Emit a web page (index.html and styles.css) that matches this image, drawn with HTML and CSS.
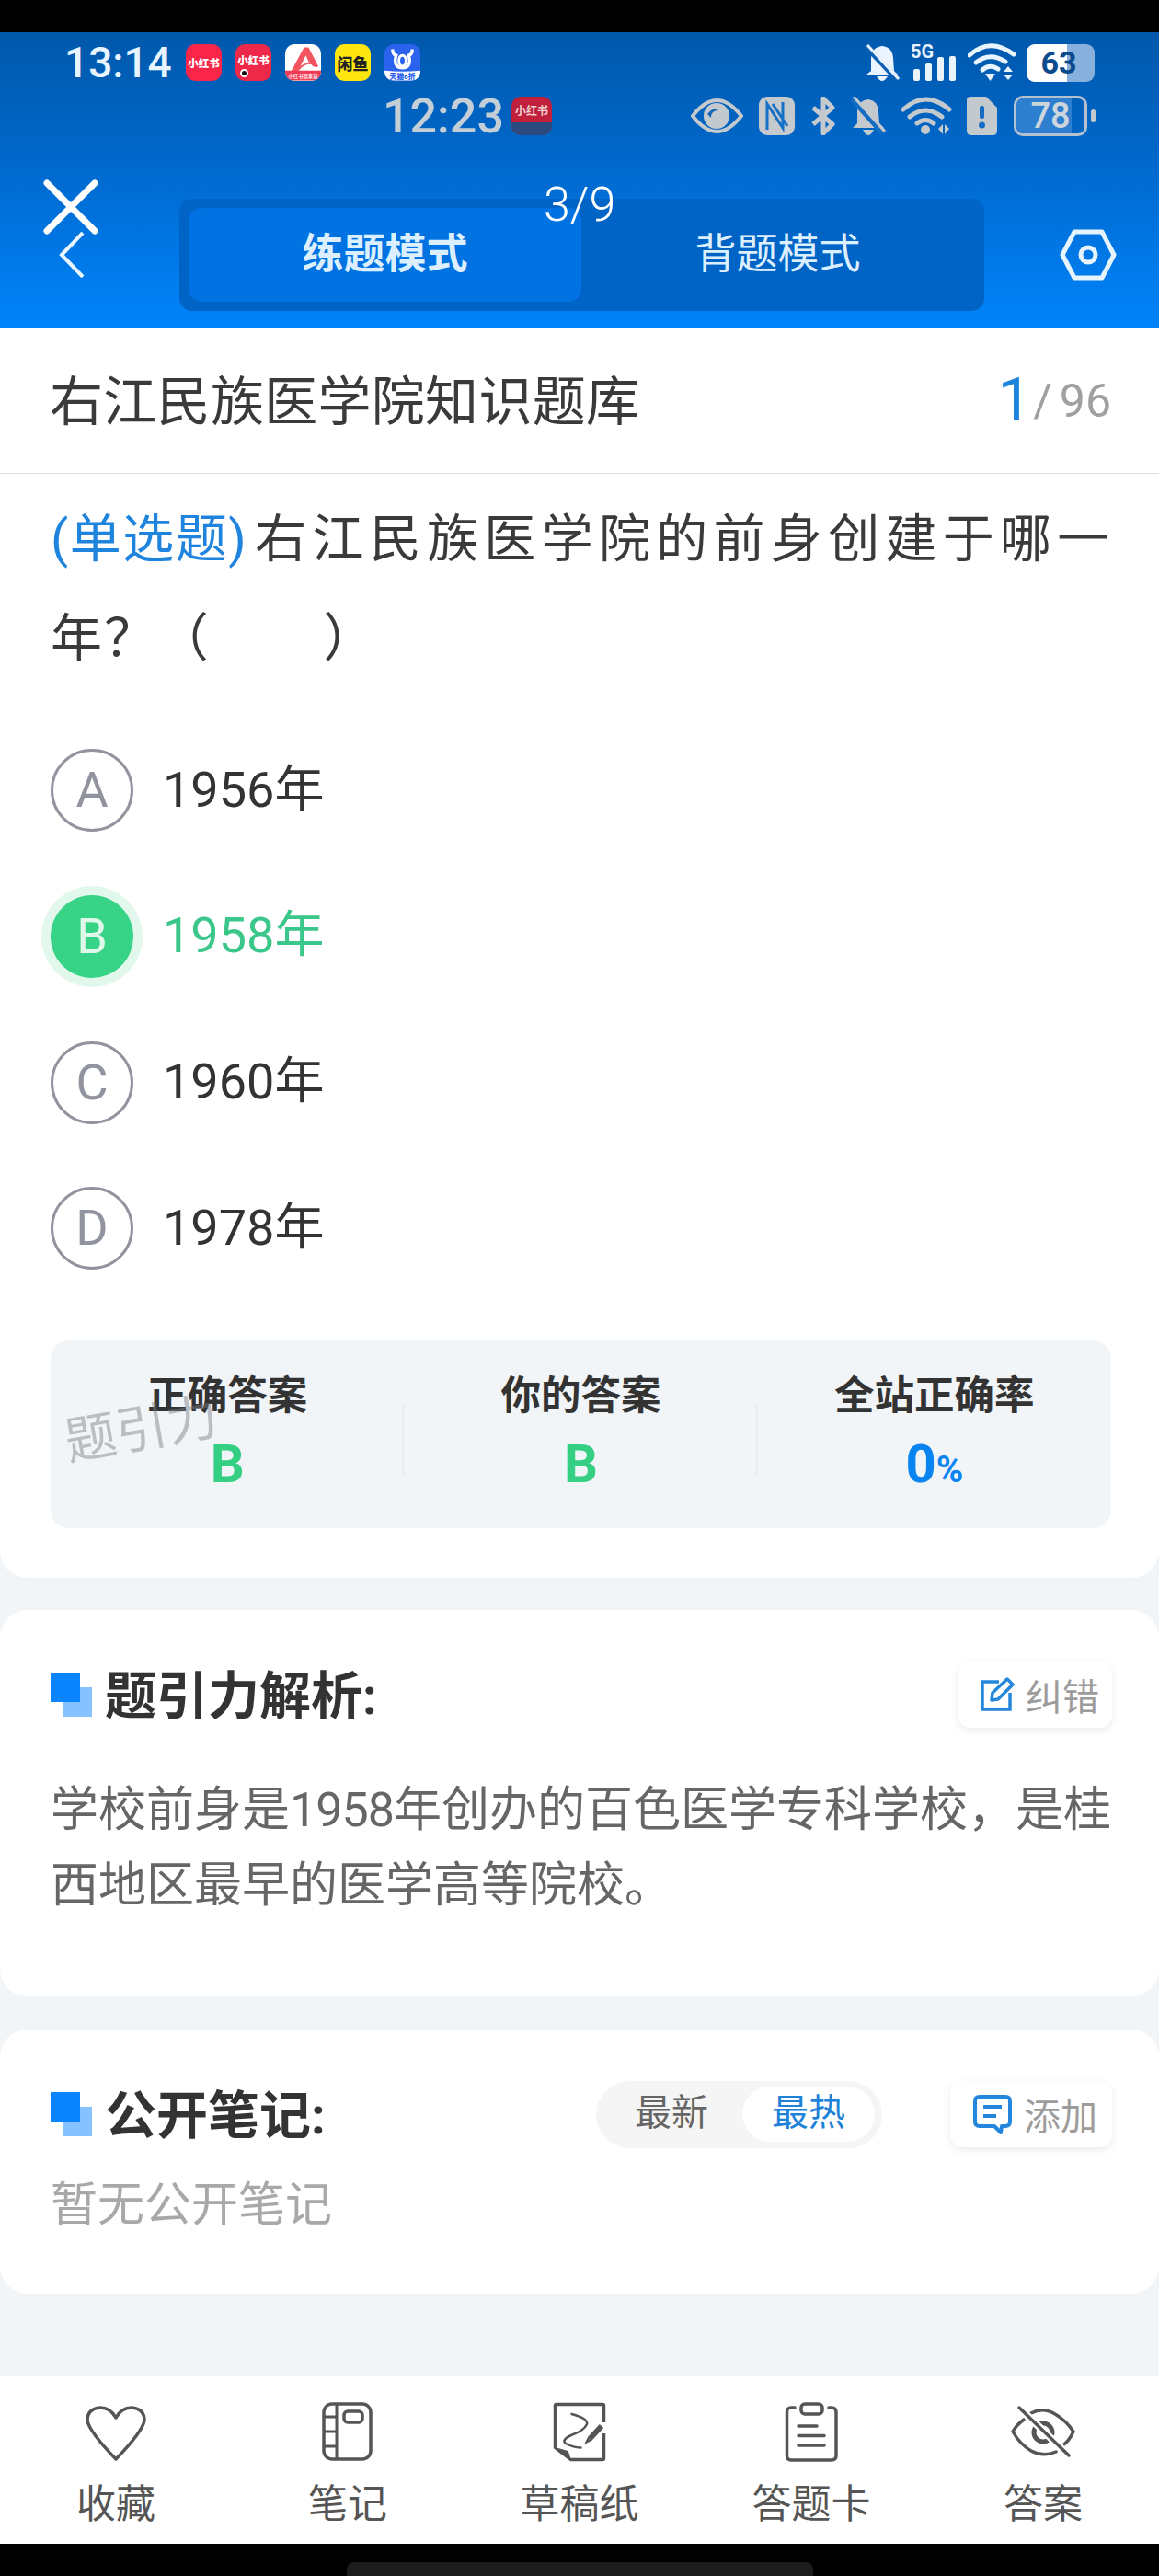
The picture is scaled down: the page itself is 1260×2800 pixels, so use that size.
FILE: index.html
```html
<!DOCTYPE html>
<html lang="zh">
<head>
    <meta charset="utf-8">
    <title>右江民族医学院知识题库</title>
    <link rel="stylesheet" href="styles.css">
</head>
<body>
<div class="phone">
    <div class="top-black"></div>

    <header class="header">
        <!-- system status bar -->
        <div class="status status-a">
            <span class="time-a">13:14</span>
            <div class="apps">
                <span class="app app-red">小红书</span>
                <span class="app app-red2">小红书<i class="app-dot"></i></span>
                <span class="app app-white">
                    <svg viewBox="0 0 40 40" class="app-svg"><path d="M21 3 H26 L37 24 Q33 27 29 22 Q24 21 18 26 L11 33 L6 31 Z M23 12 L17 24 Q22 20 27 21 Z" fill="#f2555f" fill-rule="evenodd"/><path d="M0 29 H40 V34 Q40 40 34 40 H6 Q0 40 0 34 Z" fill="#ee3a52"/><text x="20" y="37" class="band-text band-light">小红书赛家版</text></svg>
                </span>
                <span class="app app-yellow">闲鱼</span>
                <span class="app app-blue">
                    <svg viewBox="0 0 40 40" class="app-svg"><path d="M9 5 Q9 11 13 12 Q12 15 12 18 Q12 26 20 26 Q28 26 28 18 Q28 15 27 12 Q31 11 31 5" fill="none" stroke="#fff" stroke-width="3.500"/><ellipse cx="20" cy="18" rx="4" ry="6" fill="none" stroke="#fff" stroke-width="3"/><path d="M0 29 Q20 31 40 29 V34 Q40 40 34 40 H6 Q0 40 0 34 Z" fill="#fff"/><text x="20" y="38" class="band-text band-blue">天猫6折</text></svg>
                </span>
            </div>
            <div class="status-icons">
                <svg class="ic-bell" viewBox="0 0 38 40"><path d="M19 2 Q30 3 31 15 L32 29 L36 33 H2 L7 29 L7 15 Q8 3 19 2 Z M13 35 H25 Q22 40 19 40 Q16 40 13 35 Z" fill="#eaf4ff"/><path d="M2 3 L35 38" stroke="#0a5fb4" stroke-width="6"/><path d="M3 1 L37 38" stroke="#eaf4ff" stroke-width="3"/></svg>
                <svg class="ic-signal" viewBox="0 0 49 40"><text x="0" y="15" class="sig-text">5G</text><rect x="3" y="27" width="7" height="13" rx="2" fill="#eaf4ff"/><rect x="16" y="21" width="7" height="19" rx="2" fill="#eaf4ff"/><rect x="29" y="14" width="7" height="26" rx="2" fill="#eaf4ff"/><rect x="42" y="13" width="7" height="27" rx="2" fill="#eaf4ff"/></svg>
                <svg class="ic-wifi" viewBox="0 0 52 42"><g fill="none" stroke="#eaf4ff" stroke-width="5" stroke-linecap="round"><path d="M2 13 Q24 -7 50 12"/><path d="M9 21 Q24 9 41 20"/><path d="M16 29 Q24 22 33 28"/></g><path d="M19 33 H30 L24.500 41 Z" fill="#eaf4ff"/><path d="M44 25 L49 31 H39 Z M39 34 H49 L44 40 Z" fill="#eaf4ff"/></svg>
                <div class="bat-a"><span class="bat-a-fill"></span><span class="bat-a-num">63</span></div>
            </div>
        </div>

        <!-- second status bar, from the page capture -->
        <div class="status status-b">
            <span class="time-b">12:23</span>
            <span class="app-b">小红书<i class="app-b-band"></i></span>
            <div class="status-icons-b">
                <svg class="ic-eye" viewBox="0 0 57 40"><path d="M2 20 Q28 -14 55 20 Q28 54 2 20 Z" fill="none" stroke="#c4c9ce" stroke-width="4"/><circle cx="28" cy="20" r="14" fill="#c4c9ce"/><path d="M18 18 Q24 10 30 14 Q22 14 22 22 Z" fill="#1566b8"/></svg>
                <svg class="ic-nfc" viewBox="0 0 39 42"><rect width="39" height="42" rx="9" fill="#c4c9ce"/><path d="M9 36 V8 L26 34 V6 M15 8 L31 32" fill="none" stroke="#1670c6" stroke-width="3"/></svg>
                <svg class="ic-bt" viewBox="0 0 28 42"><path d="M3 12 L24 30 L14 40 V2 L24 12 L3 30" fill="none" stroke="#c4c9ce" stroke-width="5" stroke-linejoin="round"/></svg>
                <svg class="ic-bell-b" viewBox="0 0 38 42"><path d="M19 3 Q29 4 30 16 L31 29 L36 34 H2 L7 29 L7 16 Q8 4 19 3 Z M13 36 H25 Q22 42 19 42 Q16 42 13 36 Z" fill="#c4c9ce"/><path d="M1 2 L35 40" stroke="#136cc2" stroke-width="6"/><path d="M3 0 L37 38" stroke="#c4c9ce" stroke-width="3"/></svg>
                <svg class="ic-wifi-b" viewBox="0 0 55 42"><g fill="none" stroke="#c4c9ce" stroke-width="5" stroke-linecap="round"><path d="M2 14 Q26 -8 52 14"/><path d="M9 22 Q26 8 44 22"/><path d="M17 29 Q26 22 35 29"/></g><circle cx="26" cy="36" r="5" fill="#c4c9ce"/><path d="M40 35 L45 30 V41 Z M47 30 L52 35 L47 41 Z" fill="#c4c9ce"/></svg>
                <svg class="ic-sim" viewBox="0 0 33 42"><path d="M4 0 H21 L33 12 V37 Q33 42 28 42 H5 Q0 42 0 37 V4 Q0 0 4 0 Z" fill="#c4c9ce"/><rect x="14" y="10" width="5" height="14" rx="2" fill="#136cc2"/><circle cx="16.500" cy="31" r="3.500" fill="#136cc2"/></svg>
                <div class="bat-b"><span class="bat-b-fill"></span><span class="bat-b-num">78</span></div>
                <span class="bat-b-nub"></span>
            </div>
        </div>

        <div class="tab-row">
            <svg class="ic-back" viewBox="0 0 28 50"><path d="M26 1 L3 25 L26 49" fill="none" stroke="#eaf6ff" stroke-width="4"/></svg>
            <div class="tabs">
                <div class="tab tab-on">练题模式</div>
                <div class="tab">背题模式</div>
            </div>
            <svg class="ic-hex" viewBox="0 0 62 56"><path d="M16 3 H46 L59 28 L46 53 H16 L3 28 Z" fill="none" stroke="#e6f4ff" stroke-width="5" stroke-linejoin="round"/><circle cx="31" cy="28" r="8" fill="none" stroke="#e6f4ff" stroke-width="5"/></svg>
        </div>

        <svg class="ic-close" viewBox="0 0 60 60"><path d="M4 4 L56 56 M56 4 L4 56" stroke="#fff" stroke-width="7" stroke-linecap="round"/></svg>
        <div class="counter">3/9</div>
    </header>

    <main class="main">
        <section class="card card-q">
            <div class="title-row">
                <span class="title">右江民族医学院知识题库</span>
                <span class="progress"><b>1</b><i>/</i>96</span>
            </div>
            <div class="question"><span class="q-type">(单选题)</span>右江民族医学院的前身创建于哪一<br>年<span class="q-tail">？（&nbsp;&nbsp;&nbsp;&nbsp;&nbsp;&nbsp;&nbsp;&nbsp;）</span></div>

            <div class="options">
                <div class="option"><span class="letter">A</span><span class="opt-text">1956年</span></div>
                <div class="option option-ok"><span class="letter">B</span><span class="opt-text">1958年</span></div>
                <div class="option"><span class="letter">C</span><span class="opt-text">1960年</span></div>
                <div class="option"><span class="letter">D</span><span class="opt-text">1978年</span></div>
            </div>

            <div class="stats">
                <div class="stat">
                    <div class="stat-label">正确答案</div>
                    <div class="stat-val green">B</div>
                </div>
                <div class="stat">
                    <div class="stat-label">你的答案</div>
                    <div class="stat-val green">B</div>
                </div>
                <div class="stat">
                    <div class="stat-label">全站正确率</div>
                    <div class="stat-val blue">0<small>%</small></div>
                </div>
                <div class="watermark">题引力</div>
            </div>
        </section>

        <section class="card card-analysis">
            <div class="sec-head">
                <span class="sec-mark"></span>
                <h2 class="sec-title">题引力解析:</h2>
                <div class="mini-btn">
                    <svg class="ic-edit" viewBox="0 0 38 38"><path d="M21 5 H3 V35 H33 V17" fill="none" stroke="#2487dc" stroke-width="3.500"/><path d="M13 25 L14 17 L30 2 L36 8 L20 24 Z" fill="none" stroke="#2487dc" stroke-width="3.500" stroke-linejoin="round"/></svg>
                    纠错
                </div>
            </div>
            <p class="analysis">学校前身是<span class="tight">1958</span>年创办的百色医学专科学校，是桂<br>西地区最早的医学高等院校。</p>
        </section>

        <section class="card card-notes">
            <div class="sec-head">
                <span class="sec-mark"></span>
                <h2 class="sec-title">公开笔记:</h2>
                <div class="sort">
                    <span class="sort-item">最新</span>
                    <span class="sort-item sort-on">最热</span>
                </div>
                <div class="mini-btn mini-btn-add">
                    <svg class="ic-note" viewBox="0 0 44 44"><path d="M8 3 H36 Q41 3 41 8 V30 Q41 35 36 35 H32 L31 42 L24 35 H8 Q3 35 3 30 V8 Q3 3 8 3 Z" fill="none" stroke="#2487dc" stroke-width="4" stroke-linejoin="round"/><path d="M12 14 H32 M12 24 H26" stroke="#2487dc" stroke-width="4"/></svg>
                    添加
                </div>
            </div>
            <p class="empty">暂无公开笔记</p>
        </section>
    </main>

    <nav class="bottom">
        <div class="nav-item">
            <svg class="nav-ic" viewBox="0 0 70 66"><path d="M35 63 Q6 33 4 21 Q4 8 18 7 Q29 7 35 18 Q41 7 52 7 Q66 8 66 21 Q64 33 35 63 Z" fill="none" stroke="#555" stroke-width="3.500" stroke-linejoin="round"/></svg>
            <span>收藏</span>
        </div>
        <div class="nav-item">
            <svg class="nav-ic" viewBox="0 0 70 66"><rect x="9" y="3" width="51" height="60" rx="9" fill="none" stroke="#555" stroke-width="3.500"/><path d="M23 3 V63 M9 17 H23 M9 33 H23 M9 49 H23" stroke="#555" stroke-width="3"/><rect x="31" y="11" width="20" height="12" rx="4" fill="none" stroke="#555" stroke-width="3.500"/></svg>
            <span>笔记</span>
        </div>
        <div class="nav-item">
            <svg class="nav-ic" viewBox="0 0 70 66"><path d="M8.500 51 V5 Q8.500 3.500 10 3.500 H60 Q61.500 3.500 61.500 5 V23 M61.500 35 V62 Q61.500 63.500 60 63.500 H25" fill="none" stroke="#555" stroke-width="3.500"/><path d="M8 51 L25 64 L22 55 Z" fill="#555" stroke="#555" stroke-width="2" stroke-linejoin="round"/><path d="M26.500 14 Q45 19 43 25 Q40 32 26 37 Q15 42 20 46 Q27 50 36.500 50.500" fill="none" stroke="#555" stroke-width="2.500" stroke-linecap="round"/><path d="M59 27 L46 41" stroke="#555" stroke-width="6"/><path d="M44 39 L48 43 L40 47 Z" fill="#555"/></svg>
            <span>草稿纸</span>
        </div>
        <div class="nav-item">
            <svg class="nav-ic" viewBox="0 0 70 66"><path d="M17 7 H13 Q8.500 7 8.500 12 V59 Q8.500 64 13 64 H57 Q62 64 62 59 V12 Q62 7 57 7 H54" fill="none" stroke="#555" stroke-width="3.500" stroke-linecap="round"/><rect x="24" y="3" width="23" height="11" rx="4" fill="none" stroke="#555" stroke-width="3.500"/><path d="M21 27 H41 M21 37.500 H49 M21 48 H49" stroke="#555" stroke-width="3.500" stroke-linecap="round"/></svg>
            <span>答题卡</span>
        </div>
        <div class="nav-item">
            <svg class="nav-ic" viewBox="0 0 70 66"><path d="M22 13 Q35 6 48 14 Q60 21 68 33 Q63 44 55 49 M49 55 Q35 61 22 54 Q10 47 2 33 Q6 26 14 20" fill="none" stroke="#555" stroke-width="3.500" stroke-linecap="round" stroke-linejoin="round"/><circle cx="35" cy="34" r="10" fill="none" stroke="#555" stroke-width="5"/><path d="M9 7 L63 59" stroke="#fff" stroke-width="8"/><path d="M9 7 L63 59" stroke="#555" stroke-width="3.500" stroke-linecap="round"/></svg>
            <span>答案</span>
        </div>
    </nav>

    <div class="bottom-black"><div class="home-bar"></div></div>
</div>
</body>
</html>
```

FILE: styles.css
```css
* {
    box-sizing: border-box;
}
body {
    margin: 0;
    background: #000;
    font-family: Roboto, "Noto Sans CJK SC", sans-serif;
    color: #333;
}
.phone {
    width: 1260px;
    height: 2800px;
    display: flex;
    flex-direction: column;
    overflow: hidden;
}
.top-black {
    height: 35px;
    background: #000;
}

/* header */
.header {
    position: relative;
    height: 322px;
    padding-top: 13px;
    background: linear-gradient(180deg, #0058ab 0%, #0069cd 45%, #0084fb 100%);
}
.status {
    display: flex;
    align-items: center;
}
.status-a {
    height: 40px;
    padding: 0 70px;
}
.time-a {
    width: 132px;
    font-size: 46px;
    font-weight: 500;
    color: #e8f4fe;
}
.apps {
    display: flex;
    gap: 15px;
}
.app {
    position: relative;
    width: 39px;
    height: 40px;
    border-radius: 10px;
    overflow: hidden;
    display: flex;
    align-items: center;
    justify-content: center;
    font-size: 11.500px;
    font-weight: 900;
    color: #fff;
    white-space: nowrap;
}
.app-red {
    background: #f9264a;
}
.app-red2 {
    background: #ee2848;
    padding-bottom: 6px;
}
.app-dot {
    position: absolute;
    left: 5px;
    bottom: 4px;
    width: 9px;
    height: 9px;
    border-radius: 50%;
    background: #111;
    border: 2px solid #fff;
}
.app-white {
    background: #fff;
}
.app-yellow {
    background: #ffe60f;
    color: #222;
    font-size: 17px;
}
.app-blue {
    background: #2b62ee;
}
.app-svg {
    width: 39px;
    height: 40px;
    display: block;
}
.band-text {
    font-size: 5.500px;
    text-anchor: middle;
}
.band-light {
    fill: #ffd5da;
}
.band-blue {
    fill: #2b62ee;
    font-size: 8px;
}
.status-icons {
    margin-left: auto;
    display: flex;
    align-items: center;
}
.ic-bell {
    width: 38px;
    height: 40px;
}
.ic-signal {
    width: 49px;
    height: 40px;
    margin-left: 12px;
    overflow: visible;
}
.sig-text {
    font-size: 20px;
    font-weight: 700;
    fill: #eaf4ff;
}
.ic-wifi {
    width: 52px;
    height: 42px;
    margin-left: 13px;
}
.bat-a {
    position: relative;
    width: 74px;
    height: 41px;
    margin-left: 12px;
    border-radius: 9px;
    overflow: hidden;
    background: #88b0dc;
    text-align: center;
}
.bat-a-fill {
    position: absolute;
    left: 0;
    top: 0;
    width: 44px;
    height: 41px;
    background: #fff;
}
.bat-a-num {
    position: relative;
    left: -2px;
    font-size: 34px;
    line-height: 41px;
    font-weight: 700;
    color: #0b4a8c;
}
.status-b {
    height: 42px;
    margin-top: 17px;
    padding: 0 69px 0 416px;
}
.time-b {
    width: 140px;
    font-size: 52px;
    font-weight: 500;
    color: #c3ced7;
}
.app-b {
    position: relative;
    width: 44px;
    height: 42px;
    padding-top: 6px;
    border-radius: 10px;
    overflow: hidden;
    background: #c0203c;
    color: #f0d0d0;
    font-size: 12px;
    font-weight: 700;
    text-align: center;
    white-space: nowrap;
}
.app-b-band {
    position: absolute;
    left: 0;
    bottom: 0;
    width: 44px;
    height: 14px;
    background: #2a4a80;
}
.status-icons-b {
    margin-left: auto;
    display: flex;
    align-items: center;
}
.ic-eye {
    width: 57px;
    height: 40px;
}
.ic-nfc {
    width: 39px;
    height: 42px;
    margin-left: 17px;
}
.ic-bt {
    width: 28px;
    height: 42px;
    margin-left: 17px;
}
.ic-bell-b {
    width: 38px;
    height: 42px;
    margin-left: 16px;
}
.ic-wifi-b {
    width: 55px;
    height: 42px;
    margin-left: 17px;
}
.ic-sim {
    width: 33px;
    height: 42px;
    margin-left: 16px;
}
.bat-b {
    position: relative;
    width: 80px;
    height: 44px;
    margin-left: 18px;
    border: 3px solid #b4c2d0;
    border-radius: 10px;
    overflow: hidden;
    text-align: center;
}
.bat-b-fill {
    position: absolute;
    left: 0;
    top: 0;
    width: 60px;
    height: 38px;
    background: #2e7fd0;
}
.bat-b-num {
    position: relative;
    font-size: 38px;
    font-weight: 500;
    line-height: 38px;
    color: #cdd6dd;
}
.bat-b-nub {
    width: 5px;
    height: 14px;
    margin-left: 4px;
    border-radius: 3px;
    background: #c4c9ce;
}

.tab-row {
    display: flex;
    align-items: center;
    margin-top: 69px;
    padding-left: 64px;
}
.ic-back {
    width: 28px;
    height: 50px;
    margin-right: 103px;
}
.tabs {
    display: flex;
    width: 875px;
    height: 122px;
    padding: 10px;
    background: #0064c6;
    border-radius: 14px;
}
.tab {
    width: 427px;
    height: 102px;
    border-radius: 14px;
    font-size: 45px;
    line-height: 102px;
    text-align: center;
    color: #dcefff;
}
.tab-on {
    background: #0072e2;
    font-weight: 700;
}
.ic-hex {
    width: 62px;
    height: 56px;
    margin-left: 82px;
}
.ic-close {
    position: absolute;
    left: 47px;
    top: 160px;
    width: 60px;
    height: 60px;
}
.counter {
    position: absolute;
    left: 591px;
    top: 163px;
    font-size: 52px;
    font-weight: 300;
    line-height: 50px;
    color: #fff;
}

/* content */
.main {
    flex: 1;
    background: #f1f5f8;
}
.card {
    background: #fff;
    border-radius: 30px;
}
.card-q {
    height: 1358px;
    border-radius: 0 0 30px 30px;
    padding: 0 52px 0 55px;
}
.title-row {
    display: flex;
    align-items: center;
    justify-content: space-between;
    height: 158px;
    margin: 0 -52px 0 -55px;
    padding: 0 52px 8px 54px;
    border-bottom: 1px solid #dcdfe2;
}
.title {
    font-size: 58px;
    letter-spacing: 0.300px;
    color: #3a3a3a;
}
.progress {
    margin-top: 4px;
    font-size: 50px;
    color: #a0a0a0;
}
.progress b {
    font-size: 65px;
    font-weight: 400;
    vertical-align: -3px;
    color: #1c84dc;
}
.progress i {
    font-style: normal;
    margin: 0 8px 0 2px;
}
.question {
    margin-top: 17px;
    font-size: 56px;
    line-height: 108px;
    letter-spacing: 6.300px;
    white-space: nowrap;
    color: #3a3a3a;
}
.q-type {
    color: #1f84de;
    letter-spacing: 1.500px;
    margin-right: 8px;
}
.q-tail {
    margin-left: -4px;
    letter-spacing: 1.500px;
}
.options {
    margin-top: 32px;
}
.option {
    display: flex;
    align-items: center;
    height: 158.670px;
    font-size: 54px;
    color: #333;
}
.opt-text {
    margin-bottom: 12px;
}
.letter {
    width: 90px;
    height: 90px;
    margin-right: 32px;
    border: 3px solid #91939f;
    border-radius: 50%;
    font-size: 54px;
    line-height: 84px;
    text-align: center;
    color: #91939f;
}
.option-ok {
    color: #3cc78a;
}
.option-ok .letter {
    border: 0;
    line-height: 90px;
    background: #37d487;
    box-shadow: 0 0 0 10px #e2f8ec;
    color: #dff8ea;
}
.stats {
    position: relative;
    display: flex;
    height: 204px;
    margin-top: 42px;
    background: #f1f5f8;
    border-radius: 20px;
}
.stat {
    flex: 1;
    padding-top: 28px;
    text-align: center;
    background: linear-gradient(#e8ecef, #e8ecef) right 70px / 2px 76px no-repeat;
}
.stat:nth-child(3) {
    background: none;
}
.stat-label {
    font-size: 43.500px;
    font-weight: 700;
    line-height: 66px;
    color: #333;
}
.stat-val {
    margin-top: 7px;
    font-size: 58px;
    font-weight: 700;
    line-height: 66px;
}
.stat-val small {
    font-size: 40px;
}
.green {
    color: #35cf84;
}
.blue {
    color: #0a84f0;
}
.watermark {
    position: absolute;
    left: 15px;
    top: 62px;
    font-size: 56px;
    line-height: 70px;
    color: rgba(120, 125, 130, 0.45);
    transform: rotate(-10deg);
}

.card-analysis {
    height: 420px;
    margin-top: 35px;
    padding: 56px 51px 0 55px;
}
.card-notes {
    height: 287px;
    margin-top: 36px;
    padding: 56px 51px 0 55px;
}
.sec-head {
    display: flex;
    align-items: center;
    height: 72px;
}
.sec-mark {
    position: relative;
    width: 45px;
    height: 48px;
    margin-right: 14px;
    background: linear-gradient(#0a84ff, #0a84ff) left top / 32px 32px no-repeat,
        linear-gradient(#86c2ff, #86c2ff) right bottom / 32px 32px no-repeat;
}
.sec-title {
    margin: 0 0 8px;
    font-size: 56px;
    font-weight: 700;
    color: #333;
}
.mini-btn {
    display: flex;
    align-items: center;
    height: 72px;
    margin-left: auto;
    padding: 0 14px 0 24px;
    background: #fff;
    border-radius: 14px;
    box-shadow: 0 3px 10px rgba(0, 0, 0, 0.08);
    font-size: 40px;
    color: #9c9c9c;
}
.ic-edit {
    width: 38px;
    height: 38px;
    margin-right: 12px;
}
.analysis {
    margin: 49px 0 0;
    font-size: 52px;
    line-height: 82px;
    white-space: nowrap;
    color: #666;
}
.tight {
    letter-spacing: -1px;
}
.sort {
    display: flex;
    align-items: center;
    width: 311px;
    height: 73px;
    margin-left: auto;
    padding: 0 8px 0 42px;
    background: #f5f5f5;
    border-radius: 37px;
    font-size: 40px;
    color: #666;
}
.sort-item {
    height: 60px;
    line-height: 58px;
    white-space: nowrap;
}
.sort-on {
    width: 144px;
    margin-left: auto;
    background: #fff;
    border-radius: 30px;
    text-align: center;
    color: #1e82d8;
}
.mini-btn-add {
    margin-left: 74px;
    padding-left: 24px;
    padding-right: 16px;
}
.ic-note {
    width: 44px;
    height: 44px;
    margin-right: 12px;
}
.empty {
    margin: 28px 0 0;
    font-size: 51px;
    line-height: 70px;
    color: #a8a8a8;
}

/* bottom nav */
.bottom {
    display: flex;
    height: 182px;
    background: #fff;
}
.nav-item {
    flex: 1;
    display: flex;
    flex-direction: column;
    align-items: center;
    padding-top: 27px;
    font-size: 43px;
    color: #555;
}
.nav-ic {
    width: 70px;
    height: 66px;
}
.nav-item span {
    margin-top: 16px;
    line-height: 60px;
}
.bottom-black {
    height: 35px;
    padding-top: 20px;
    background: #000;
}
.home-bar {
    width: 507px;
    height: 15px;
    margin: 0 auto;
    border-radius: 8px 8px 0 0;
    background: #1c1c1c;
}
```
